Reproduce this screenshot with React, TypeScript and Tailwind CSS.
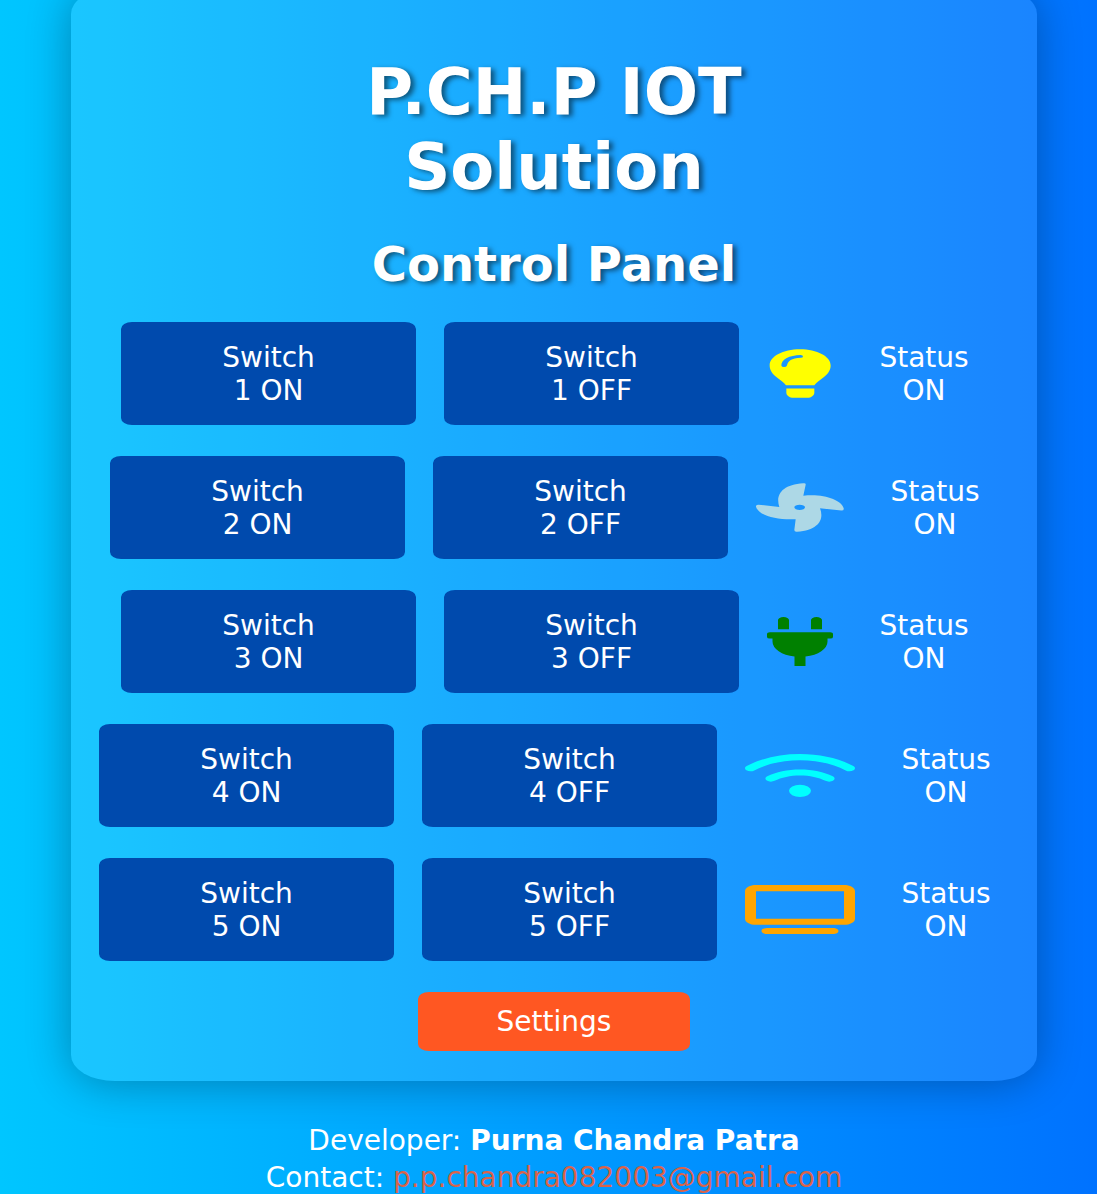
import React from "react";
import type { SVGProps } from "react";
import { FaPlug } from "react-icons/fa";
import { FaTv, FaWifi } from "react-icons/fa6";

function BulbIcon(props: SVGProps<SVGSVGElement>) {
  return (
    <svg viewBox="36 26 198 149" fill="currentColor" {...props}>
      <path
        fillRule="evenodd"
        d="M135 27C84 27 44 49 44 76c0 14 8 25 20 35 12 9 23 17 29 25h85c6-8 17-16 29-25 12-10 20-21 20-35 0-27-41-49-92-49ZM79 76c0-19 24-31 58-32q7 .5 7 4.5t-7 4C110 53 98 63 96 76q-2 5-9 5t-8-5Z"
      />
      <path d="M94 146h84v12c0 10-10 16-21 16h-42c-11 0-21-6-21-16Z" />
    </svg>
  );
}

function FanIcon(props: SVGProps<SVGSVGElement>) {
  return (
    <svg viewBox="48 23 264 149" fill="currentColor" {...props}>
      <path
        fillRule="evenodd"
        d="M190 24q8-1 7 4l-7 34c60-7 114 12 121 38q2 7-7 7l-64-7c12 30 0 66-69 71q-8 1-8-5l4-33C110 136 55 122 48 95q-1-6 8-6l62 7C106 60 125 28 190 24ZM163 97a16 8 0 1 0 32 0a16 8 0 1 0-32 0Z"
      />
    </svg>
  );
}

type Device = {
  id: number;
  icon: React.ComponentType<any>;
  iconClass: string;
};

const devices: Device[] = [
  { id: 1, icon: BulbIcon, iconClass: "w-[66px] text-[#ffff00]" },
  { id: 2, icon: FanIcon, iconClass: "w-[88px] text-[#add8e6]" },
  { id: 3, icon: FaPlug, iconClass: "w-[66px] text-[#008000]" },
  { id: 4, icon: FaWifi, iconClass: "w-[110px] text-[#00ffff]" },
  { id: 5, icon: FaTv, iconClass: "w-[110px] text-[#ffa500]" },
];

function SwitchButton({ id, state }: { id: number; state: string }) {
  return (
    <button
      type="button"
      className="h-[103px] w-[295px] rounded-[11px/7px] bg-[#004aad] text-center text-[28px] leading-[33px] text-white"
    >
      Switch
      <br />
      {id} {state}
    </button>
  );
}

function DeviceRow({ device }: { device: Device }) {
  const Icon = device.icon;
  return (
    <div className="flex items-center justify-center gap-7">
      <SwitchButton id={device.id} state="ON" />
      <SwitchButton id={device.id} state="OFF" />
      <Icon
        aria-hidden="true"
        preserveAspectRatio="none"
        className={`h-[49px] shrink-0 ${device.iconClass}`}
      />
      <p className="w-[126px] text-center text-[28px] leading-[33px] text-white">
        Status
        <br />
        ON
      </p>
    </div>
  );
}

export default function App() {
  return (
    <div className="flow-root min-h-screen overflow-hidden bg-linear-to-r from-[#00c6ff] to-[#0072ff] pr-[60px] pl-[71px] font-['DejaVu_Sans',Verdana,sans-serif] [--tw-gradient-position:to_right]">
      <main className="-mt-3 rounded-[44px/26px] bg-white/10 pt-[67px] pb-[30px] text-center shadow-[0_2px_44px_rgba(0,0,0,0.3)]">
        <h1 className="text-[64px] leading-[75px] font-bold text-white [text-shadow:4px_2px_5px_rgba(0,0,0,0.5)]">
          P.CH.P IOT
          <br />
          Solution
        </h1>
        <h2 className="mt-[35px] text-[48px] leading-[48px] font-bold text-white [text-shadow:4px_2px_5px_rgba(0,0,0,0.5)]">
          Control Panel
        </h2>
        <div className="mt-[34px] flex flex-col gap-[31px]">
          {devices.map((device) => (
            <DeviceRow key={device.id} device={device} />
          ))}
        </div>
        <button
          type="button"
          className="mt-[31px] h-[59px] w-[272px] rounded-[11px/7px] bg-[#ff5722] text-[28px] leading-[33px] text-white"
        >
          Settings
        </button>
      </main>
      <footer className="mt-[41px] text-center text-[28px] leading-[37px] text-white">
        <p>
          Developer: <strong>Purna Chandra Patra</strong>
        </p>
        <p>
          Contact:{" "}
          <a href="mailto:p.p.chandra082003@gmail.com" className="text-[#d9634a]">
            p.p.chandra082003@gmail.com
          </a>
        </p>
      </footer>
    </div>
  );
}
